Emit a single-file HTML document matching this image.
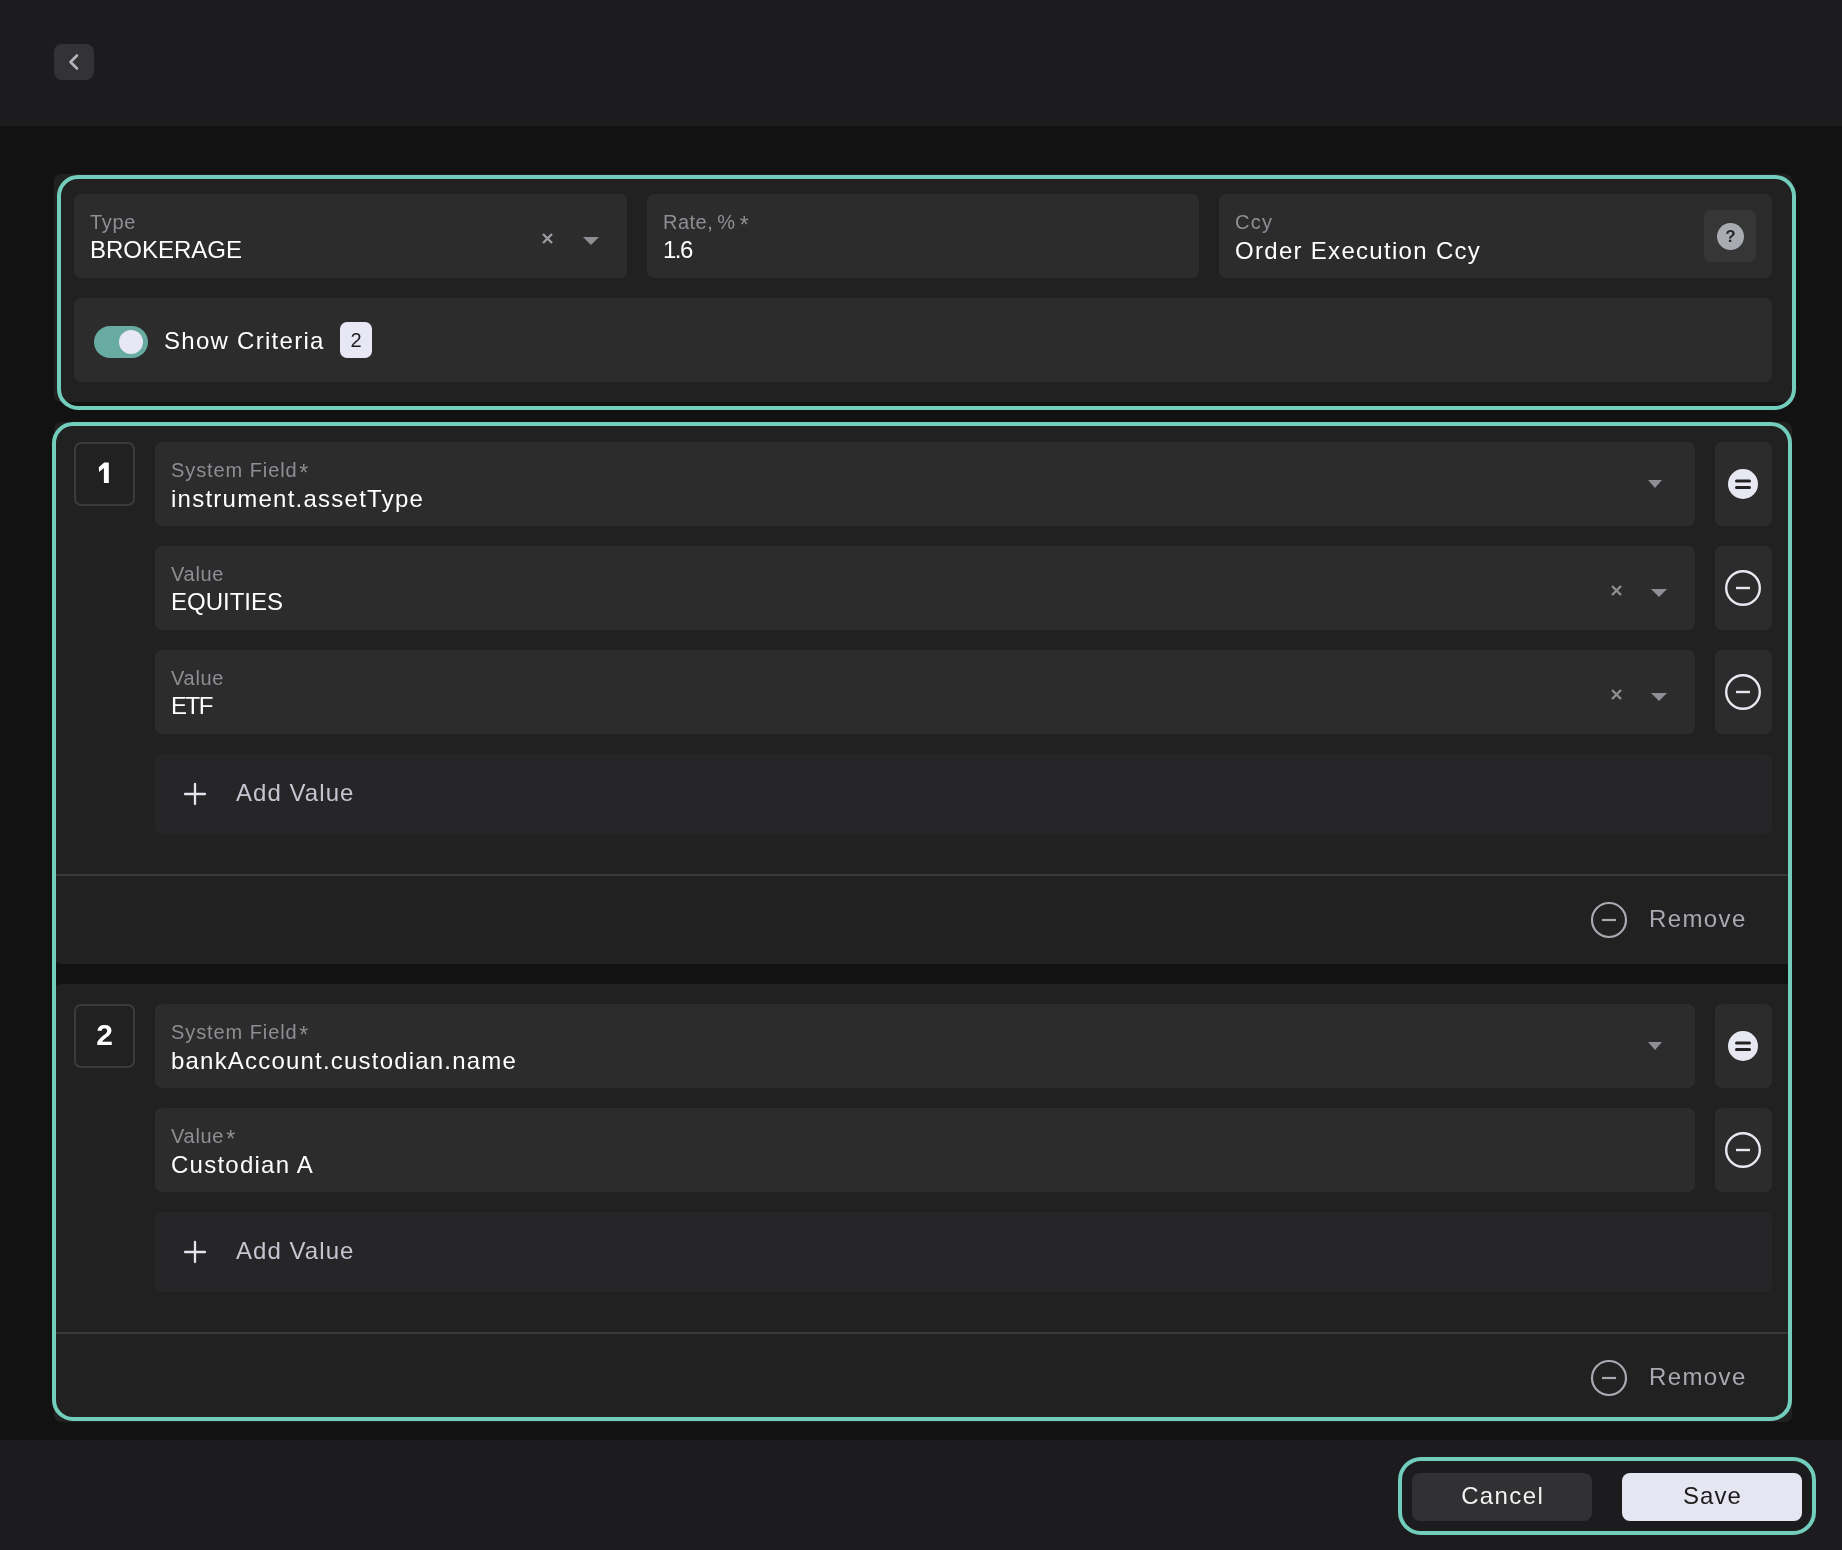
<!DOCTYPE html>
<html><head><meta charset="utf-8">
<style>
*{box-sizing:border-box;margin:0;padding:0}
html,body{-webkit-font-smoothing:antialiased;width:1842px;height:1550px;overflow:hidden;background:#121212;font-family:"Liberation Sans",sans-serif}
.a{position:absolute}
.hdr{left:0;top:0;width:1842px;height:126px;background:#1c1c1e}
.ftr{left:0;top:1440px;width:1842px;height:110px;background:#1c1c1e}
.back{left:54px;top:44px;width:40px;height:36px;border-radius:8px;background:#333335}
.panel{background:#212121;border-radius:7px}
.box{position:absolute;background:#2c2c2c;border-radius:7px;height:84px}
.lbl{will-change:transform;position:absolute;left:16px;top:18px;font-size:20px;line-height:20px;color:#8e8e94;white-space:nowrap}
.val{will-change:transform;position:absolute;left:16px;top:44px;font-size:24px;line-height:24px;color:#fff;white-space:nowrap}
.ol{position:absolute;border:4.3px solid #72cdbd;border-radius:21px}
.num{position:absolute;width:61px;height:64px;border:2px solid #3a3b3d;border-radius:7px;color:#fff;font-weight:bold;font-size:29px;line-height:60px;text-align:center}
.sbtn{position:absolute;width:57px;height:84px;background:#2c2c2c;border-radius:7px}
.add{position:absolute;left:101px;width:1617px;height:80px;background:#262628;border-radius:7px}
.addt{will-change:transform;position:absolute;left:81px;top:27px;font-size:24px;line-height:24px;color:#c4c5cf;letter-spacing:1.05px}
.div{position:absolute;left:0;width:1738px;height:2px;background:#37383a}
.rem{will-change:transform;position:absolute;font-size:24px;line-height:24px;color:#a9a9b1;letter-spacing:1.4px}
svg{position:absolute;overflow:visible}
.ast{font-size:23px;letter-spacing:0;vertical-align:-3.5px}
.t{will-change:transform}
</style></head><body>
<div class="a hdr"></div>
<div class="a back"><svg style="left:13.6px;top:10px" width="10" height="16" viewBox="0 0 10 16"><polyline points="9,1.5 2.5,8 9,14.5" fill="none" stroke="#b3b5bf" stroke-width="2.6" stroke-linecap="round" stroke-linejoin="round"/></svg></div>

<!-- panel 1 -->
<div class="a panel" style="left:54px;top:174px;width:1738px;height:228px"></div>
<div class="box" style="left:74px;top:194px;width:553px">
  <div class="lbl" style="letter-spacing:0.7px">Type</div>
  <div class="val">BROKERAGE</div>
  <svg style="left:468px;top:39px" width="11" height="11" viewBox="0 0 11 11"><path d="M1 1L10 10M10 1L1 10" stroke="#9a9aa0" stroke-width="2.4"/></svg>
  <svg style="left:509px;top:43px" width="16" height="8" viewBox="0 0 16 8"><polygon points="0,0 16,0 8,8" fill="#8e8e94"/></svg>
</div>
<div class="box" style="left:647px;top:194px;width:552px">
  <div class="lbl" style="letter-spacing:0.5px">Rate,<span style="margin-left:4px">%</span><span class="ast" style="margin-left:4.2px">*</span></div>
  <div class="val" style="letter-spacing:-1.5px">1.6</div>
</div>
<div class="box" style="left:1219px;top:194px;width:553px">
  <div class="lbl" style="letter-spacing:1.3px">Ccy</div>
  <div class="val" style="letter-spacing:1.3px;top:45px">Order Execution Ccy</div>
  <div class="a" style="left:485px;top:16px;width:52px;height:52px;border-radius:7px;background:#363636">
    <div class="a" style="left:13px;top:13px;width:27px;height:27px;border-radius:50%;background:#a9abb3;color:#262626;font-weight:bold;font-size:17px;line-height:27px;text-align:center"><div class="t">?</div></div>
  </div>
</div>
<div class="box" style="left:74px;top:298px;width:1698px">
  <div class="a" style="left:20px;top:28px;width:54px;height:32px;border-radius:16px;background:#68aba0"></div>
  <div class="a" style="left:45px;top:32px;width:24px;height:24px;border-radius:50%;background:#e8e8f4"></div>
  <div class="a t" style="left:90px;top:31px;font-size:24px;line-height:24px;color:#fff;letter-spacing:1.28px;white-space:nowrap">Show Criteria</div>
  <div class="a" style="left:266px;top:24px;width:32px;height:36px;border-radius:7px;background:#e8e8f4;color:#1c1c1c;font-size:20px;line-height:36px;text-align:center"><div class="t">2</div></div>
</div>
<div class="ol" style="left:57px;top:175px;width:1739px;height:235px"></div>

<!-- card 1 -->
<div class="a panel" style="left:54px;top:422px;width:1738px;height:542px">
  <div class="num" style="left:20px;top:20px"><svg style="left:-2px;top:-2px" width="61" height="64" viewBox="0 0 61 64"><polygon points="30.2,20.6 34.8,20.6 34.8,41 29.9,41 29.9,26.1 25,29.9 24.8,25.3" fill="#fff"/></svg></div>
  <div class="add" style="top:332px">
    <svg style="left:29px;top:29px" width="22" height="22" viewBox="0 0 22 22"><path d="M11 1V21M1 11H21" stroke="#e4e4ee" stroke-width="2.3" stroke-linecap="round"/></svg>
    <div class="addt">Add Value</div>
  </div>
  <div class="div" style="top:452px"></div>
  <svg style="left:1537px;top:480px" width="36" height="36" viewBox="0 0 36 36"><circle cx="18" cy="18" r="17" fill="none" stroke="#a9a9b1" stroke-width="2.2"/><path d="M11 18H25" stroke="#a9a9b1" stroke-width="2.2"/></svg>
  <div class="rem" style="left:1595px;top:485px">Remove</div>
</div>
<div class="box" style="left:155px;top:442px;width:1540px">
  <div class="lbl" style="letter-spacing:0.92px">System Field<span class="ast" style="margin-left:1.5px">*</span></div>
  <div class="val" style="letter-spacing:1.25px;top:45px">instrument.assetType</div>
  <svg style="left:1493px;top:38px" width="14" height="8" viewBox="0 0 16 8" preserveAspectRatio="none"><polygon points="0,0 16,0 8,8" fill="#8e8e94"/></svg>
</div>
<div class="sbtn" style="left:1715px;top:442px">
  <svg style="left:13px;top:27px" width="30" height="30" viewBox="0 0 30 30"><circle cx="15" cy="15" r="15" fill="#e8e8f2"/><path d="M8.5 12H21.5M8.5 18.5H21.5" stroke="#222" stroke-width="3" stroke-linecap="round"/></svg>
</div>
<div class="box" style="left:155px;top:546px;width:1540px">
  <div class="lbl" style="letter-spacing:0.7px">Value</div>
  <div class="val">EQUITIES</div>
  <svg style="left:1456px;top:39px" width="11" height="11" viewBox="0 0 11 11"><path d="M1 1L10 10M10 1L1 10" stroke="#8e8e94" stroke-width="2.4"/></svg>
  <svg style="left:1496px;top:43px" width="16" height="8" viewBox="0 0 16 8"><polygon points="0,0 16,0 8,8" fill="#8e8e94"/></svg>
</div>
<div class="sbtn" style="left:1715px;top:546px">
  <svg style="left:10px;top:24px" width="36" height="36" viewBox="0 0 36 36"><circle cx="18" cy="18" r="16.8" fill="none" stroke="#e8e8f0" stroke-width="2.4"/><path d="M11 18H25" stroke="#e8e8f0" stroke-width="2.4"/></svg>
</div>
<div class="box" style="left:155px;top:650px;width:1540px">
  <div class="lbl" style="letter-spacing:0.7px">Value</div>
  <div class="val" style="letter-spacing:-1.4px">ETF</div>
  <svg style="left:1456px;top:39px" width="11" height="11" viewBox="0 0 11 11"><path d="M1 1L10 10M10 1L1 10" stroke="#8e8e94" stroke-width="2.4"/></svg>
  <svg style="left:1496px;top:43px" width="16" height="8" viewBox="0 0 16 8"><polygon points="0,0 16,0 8,8" fill="#8e8e94"/></svg>
</div>
<div class="sbtn" style="left:1715px;top:650px">
  <svg style="left:10px;top:24px" width="36" height="36" viewBox="0 0 36 36"><circle cx="18" cy="18" r="16.8" fill="none" stroke="#e8e8f0" stroke-width="2.4"/><path d="M11 18H25" stroke="#e8e8f0" stroke-width="2.4"/></svg>
</div>

<!-- card 2 -->
<div class="a panel" style="left:54px;top:984px;width:1738px;height:438px">
  <div class="num" style="left:20px;top:20px;font-size:30px;line-height:58px"><div class="t">2</div></div>
  <div class="add" style="top:228px">
    <svg style="left:29px;top:29px" width="22" height="22" viewBox="0 0 22 22"><path d="M11 1V21M1 11H21" stroke="#e4e4ee" stroke-width="2.3" stroke-linecap="round"/></svg>
    <div class="addt">Add Value</div>
  </div>
  <div class="div" style="top:348px"></div>
  <svg style="left:1537px;top:376px" width="36" height="36" viewBox="0 0 36 36"><circle cx="18" cy="18" r="17" fill="none" stroke="#a9a9b1" stroke-width="2.2"/><path d="M11 18H25" stroke="#a9a9b1" stroke-width="2.2"/></svg>
  <div class="rem" style="left:1595px;top:381px">Remove</div>
</div>
<div class="box" style="left:155px;top:1004px;width:1540px">
  <div class="lbl" style="letter-spacing:0.92px">System Field<span class="ast" style="margin-left:1.5px">*</span></div>
  <div class="val" style="letter-spacing:1.2px;top:45px">bankAccount.custodian.name</div>
  <svg style="left:1493px;top:38px" width="14" height="8" viewBox="0 0 16 8" preserveAspectRatio="none"><polygon points="0,0 16,0 8,8" fill="#8e8e94"/></svg>
</div>
<div class="sbtn" style="left:1715px;top:1004px">
  <svg style="left:13px;top:27px" width="30" height="30" viewBox="0 0 30 30"><circle cx="15" cy="15" r="15" fill="#e8e8f2"/><path d="M8.5 12H21.5M8.5 18.5H21.5" stroke="#222" stroke-width="3" stroke-linecap="round"/></svg>
</div>
<div class="box" style="left:155px;top:1108px;width:1540px">
  <div class="lbl" style="letter-spacing:0.7px">Value<span class="ast" style="margin-left:2px">*</span></div>
  <div class="val" style="letter-spacing:1.24px;top:45px">Custodian A</div>
</div>
<div class="sbtn" style="left:1715px;top:1108px">
  <svg style="left:10px;top:24px" width="36" height="36" viewBox="0 0 36 36"><circle cx="18" cy="18" r="16.8" fill="none" stroke="#e8e8f0" stroke-width="2.4"/><path d="M11 18H25" stroke="#e8e8f0" stroke-width="2.4"/></svg>
</div>
<div class="ol" style="left:52px;top:422px;width:1740px;height:999px"></div>

<!-- footer -->
<div class="a ftr"></div>
<div class="a" style="left:1412px;top:1473px;width:180px;height:48px;border-radius:8px;background:#313133;color:#f2f2f2;font-size:24px;line-height:46px;text-align:center;letter-spacing:1.4px;text-indent:1.4px"><div class="t">Cancel</div></div>
<div class="a" style="left:1622px;top:1473px;width:180px;height:48px;border-radius:8px;background:#e6e6f2;color:#1b1b1b;font-size:24px;line-height:46px;text-align:center;letter-spacing:1.05px;text-indent:1px"><div class="t">Save</div></div>
<div class="ol" style="left:1398px;top:1457px;width:418px;height:78px;border-radius:23px"></div>
</body></html>
